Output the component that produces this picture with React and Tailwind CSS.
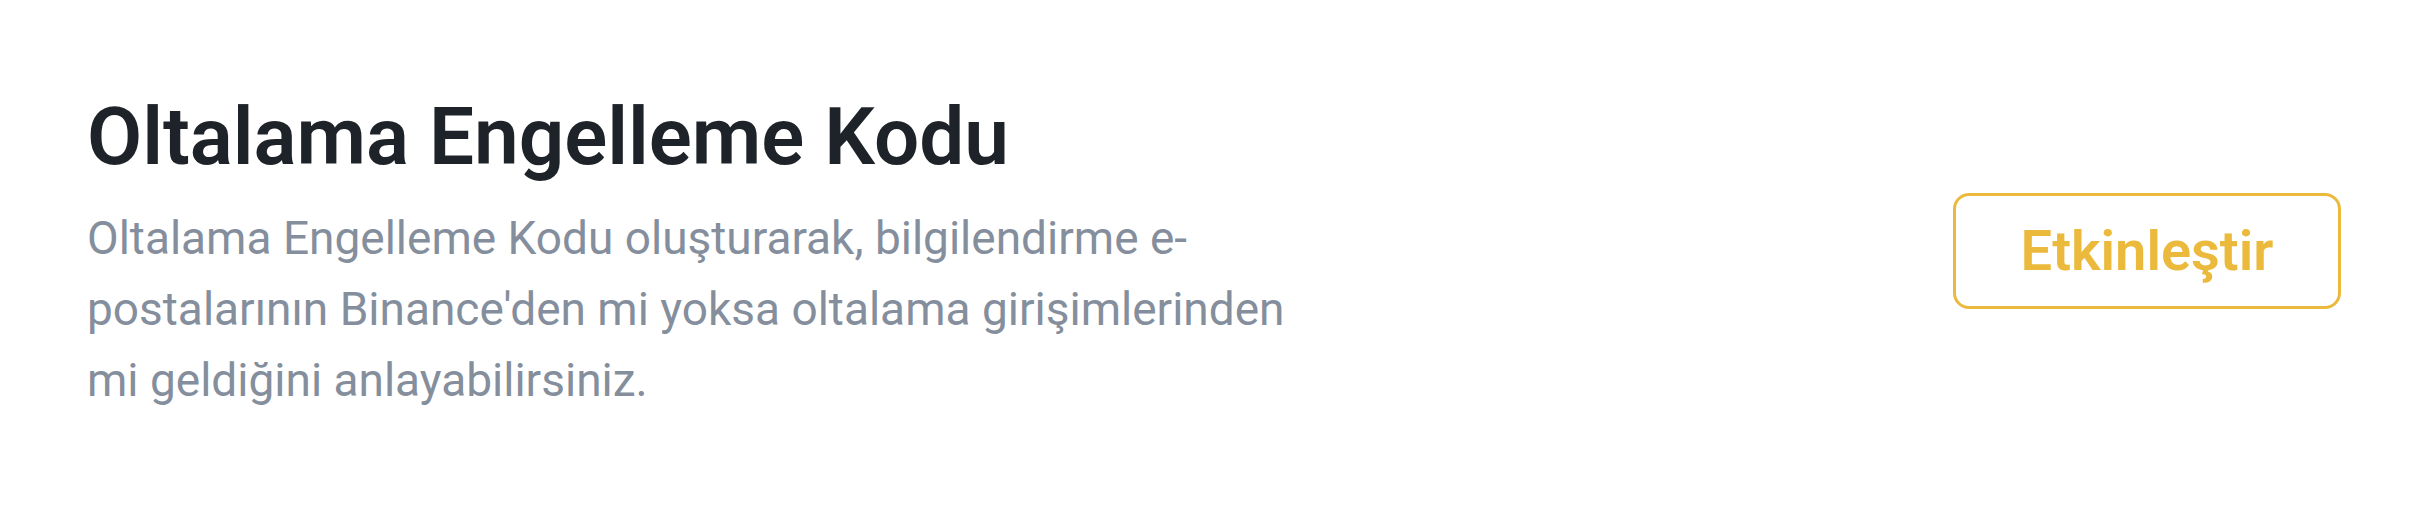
import React from 'react';

const AntiPhishingCodeRow = () => {
  return (
    <div className="flex h-[510px] w-full items-center justify-between bg-white pl-[87px] pr-[89px] font-['Roboto',sans-serif]">
      <div className="mb-[7px] flex flex-col">
        <h2 className="text-[80px] font-semibold leading-[98px] text-[#1e2329]">
          Oltalama Engelleme Kodu
        </h2>
        <p className="mt-[17px] max-w-[1230px] text-[46px] leading-[71px] text-[#848e9c]">
          Oltalama Engelleme Kodu oluşturarak, bilgilendirme e-postalarının Binance'den mi yoksa oltalama girişimlerinden mi geldiğini anlayabilirsiniz.
        </p>
      </div>
      <button
        type="button"
        className="mb-[8px] flex h-[116px] w-[388px] items-center justify-center rounded-[16px] border-[3px] border-[#ebba3c] text-[56px] font-semibold text-[#ebba3c]"
      >
        Etkinleştir
      </button>
    </div>
  );
};

export default function App() {
  return <AntiPhishingCodeRow />;
}
